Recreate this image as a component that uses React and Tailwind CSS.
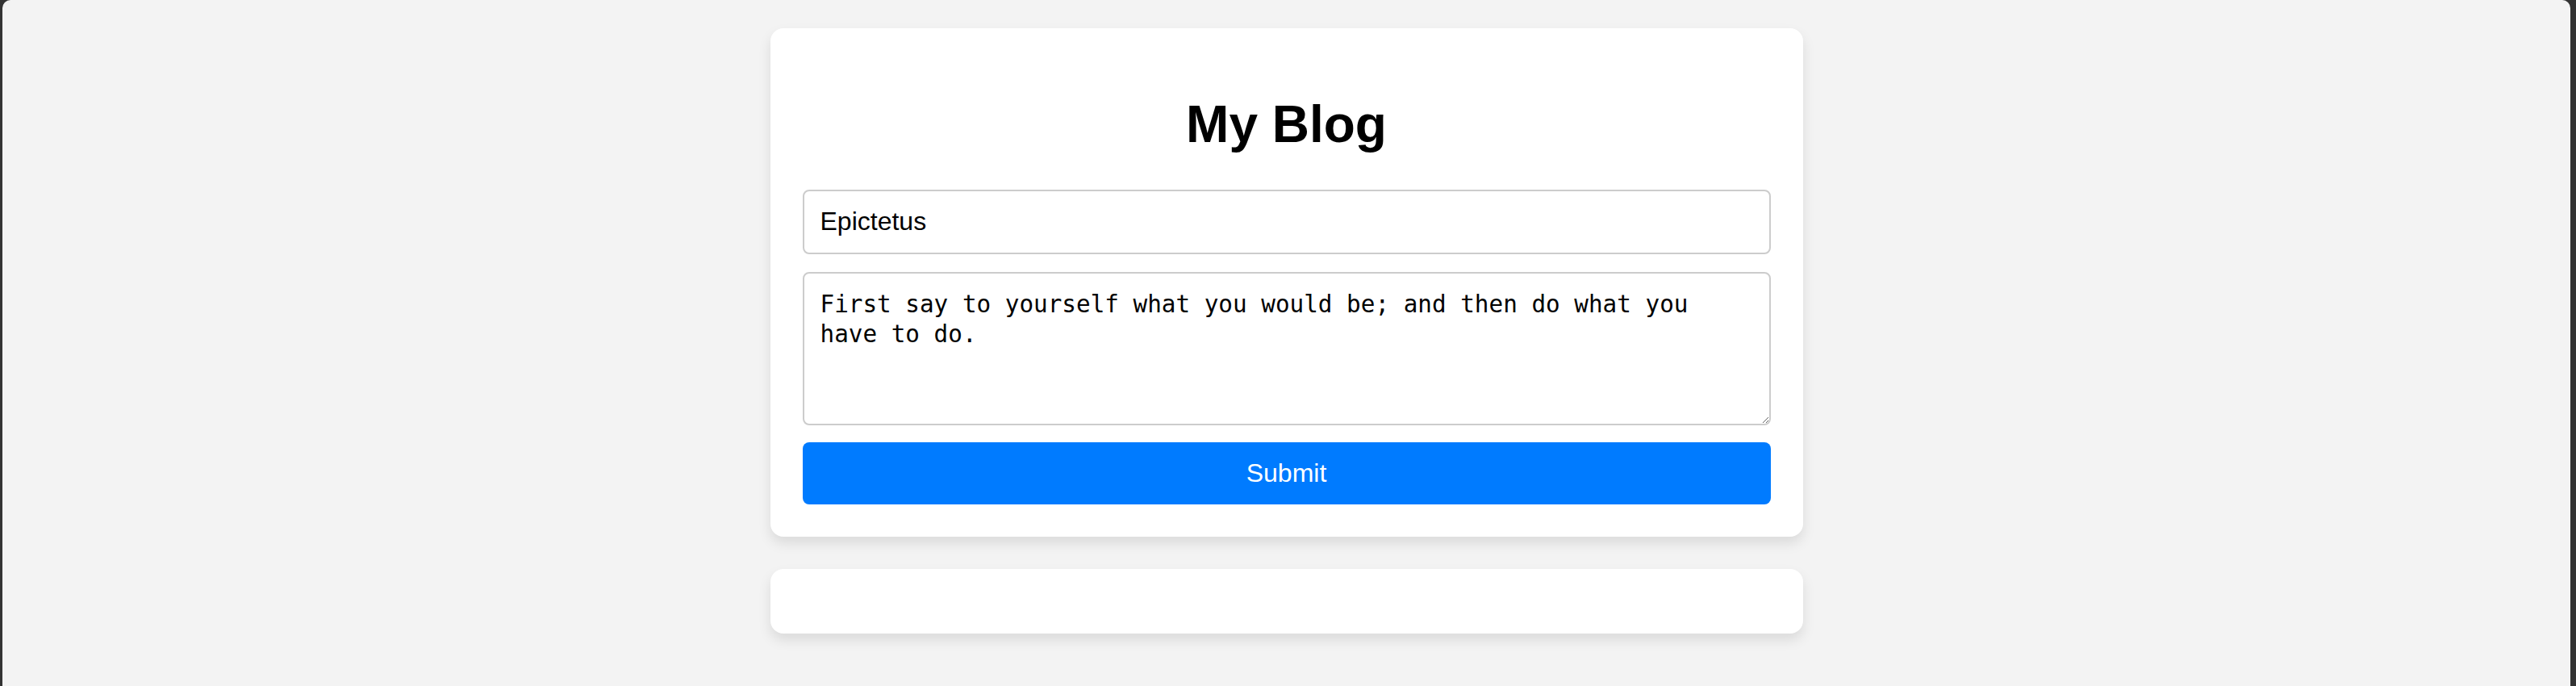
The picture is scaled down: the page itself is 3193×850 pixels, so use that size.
export default function App() {
  return (
    <div className="flex min-h-[850px] bg-[#333333]">
      <div className="ml-[3px] mr-[7px] flex-1 rounded-t-[10px] bg-[#f3f3f3] pt-[35px] pb-[40px] font-['Liberation_Sans',Arial,sans-serif] text-black">
        <div className="mx-auto w-[1280px] rounded-[16px] bg-white px-[40px] pt-[40px] pb-[40px] shadow-[0_8px_16px_rgba(0,0,0,0.1)]">
          <h1 className="mt-[43px] mb-[43px] text-center text-[64px] font-bold leading-[73.5px]">My Blog</h1>
          <input
            type="text"
            defaultValue="Epictetus"
            className="box-border block h-[80px] w-full rounded-[8px] border-2 border-[#cccccc] bg-white px-[20px] text-[32px] text-black outline-none font-['Liberation_Sans',Arial,sans-serif]"
          />
          <textarea
            defaultValue="First say to yourself what you would be; and then do what you have to do."
            className="mt-[22px] box-border block h-[190px] w-full rounded-[8px] border-2 border-[#cccccc] bg-white px-[20px] py-[20px] text-[29.3px] leading-[37.3px] text-black outline-none font-['DejaVu_Sans_Mono',monospace]"
          />
          <button
            type="button"
            className="mt-[21px] block h-[77px] w-full rounded-[8px] bg-[#007bff] text-[32px] text-white font-['Liberation_Sans',Arial,sans-serif]"
          >
            Submit
          </button>
        </div>
        <div className="mx-auto mt-[40px] h-[80px] w-[1280px] rounded-[16px] bg-white shadow-[0_8px_16px_rgba(0,0,0,0.1)]" />
      </div>
    </div>
  );
}
